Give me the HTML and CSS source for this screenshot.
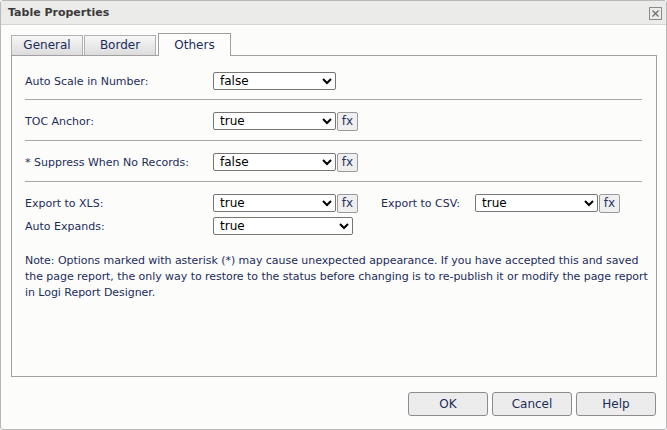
FILE: index.html
```html
<!DOCTYPE html>
<html lang="en">
<head>
    <meta charset="UTF-8">
    <title>Table Properties</title>
    <link rel="stylesheet" href="styles.css">
</head>
<body>
    <div class="dialog">
        <div class="dialog-title">
            <span>Table Properties</span>
            <svg class="close-icon" width="13" height="13" viewBox="0 0 13 13">
                <rect x="0.5" y="0.5" width="12" height="12" fill="none" stroke="#8a8a8a"/>
                <path d="M3.5 3.5 L9.5 9.5 M9.5 3.5 L3.5 9.5" stroke="#6a6a6a" stroke-width="1.2"/>
            </svg>
        </div>

        <div class="dialog-body">
            <div class="tabs">
                <div class="tab">General</div>
                <div class="tab">Border</div>
                <div class="tab active">Others</div>
            </div>

            <div class="panel">
                <div class="section first">
                    <div class="row">
                        <label class="field-label">Auto Scale in Number:</label>
                        <select class="field-select"><option>false</option><option>true</option></select>
                    </div>
                </div>

                <div class="section">
                    <div class="row">
                        <label class="field-label">TOC Anchor:</label>
                        <select class="field-select"><option>true</option><option>false</option></select>
                        <button class="fx-btn">fx</button>
                    </div>
                </div>

                <div class="section">
                    <div class="row">
                        <label class="field-label">* Suppress When No Records:</label>
                        <select class="field-select"><option>false</option><option>true</option></select>
                        <button class="fx-btn">fx</button>
                    </div>
                </div>

                <div class="section last">
                    <div class="row">
                        <label class="field-label">Export to XLS:</label>
                        <select class="field-select"><option>true</option><option>false</option></select>
                        <button class="fx-btn">fx</button>
                        <label class="field-label csv-label">Export to CSV:</label>
                        <select class="field-select"><option>true</option><option>false</option></select>
                        <button class="fx-btn">fx</button>
                    </div>
                    <div class="row">
                        <label class="field-label">Auto Expands:</label>
                        <select class="field-select wide"><option>true</option><option>false</option></select>
                    </div>
                </div>

                <p class="note">
                    Note: Options marked with asterisk (*) may cause unexpected appearance. If you have accepted this and saved<br>
                    the page report, the only way to restore to the status before changing is to re-publish it or modify the page report<br>
                    in Logi Report Designer.
                </p>
            </div>
        </div>

        <div class="dialog-footer">
            <button class="dlg-btn">OK</button>
            <button class="dlg-btn">Cancel</button>
            <button class="dlg-btn">Help</button>
        </div>
    </div>
</body>
</html>
```

FILE: styles.css
```css
html, body {
    margin: 0;
    padding: 0;
    background: #fcfdfb;
}

body {
    font-family: 'DejaVu Sans', Verdana, sans-serif;
    font-size: 11px;
    color: #1c2c5a;
}

.dialog {
    width: 667px;
    height: 430px;
    box-sizing: border-box;
    border: 1px solid #b8b8b8;
    border-radius: 3px;
    background: #fcfdfb;
    display: flex;
    flex-direction: column;
}

.dialog-title {
    height: 23px;
    display: flex;
    align-items: center;
    justify-content: space-between;
    padding: 0 4px 0 7px;
    background: #ebebe9;
    border-bottom: 1px solid #d4d4d2;
    font-size: 11px;
    font-weight: bold;
    color: #3a3a3a;
}

.close-icon {
    margin-top: 1px;
}

.dialog-body {
    padding: 9px 9px 0 10px;
}

.tabs {
    display: flex;
    align-items: flex-end;
    gap: 1px;
    height: 21px;
}

.tab {
    width: 70px;
    height: 19px;
    line-height: 19px;
    text-align: center;
    border: 1px solid #b0b0b0;
    border-bottom: none;
    background: linear-gradient(#f7f7f7, #dcdcdc);
    font-size: 12px;
}

.tab.active {
    width: 71px;
    height: 22px;
    line-height: 22px;
    margin-left: 1px;
    border-color: #a0a0a0;
    background: #fcfdfb;
    position: relative;
    top: 1px;
}

.panel {
    height: 320px;
    border: 1px solid #a0a0a0;
    padding: 0 14px 0 13px;
}

.section {
    padding: 11px 0 9px;
    border-bottom: 1px solid #a8a8a8;
}

.section.first {
    padding-top: 15px;
    padding-bottom: 8px;
}

.section.last {
    border-bottom: none;
    padding-bottom: 0;
}

.row {
    display: flex;
    align-items: center;
    height: 20px;
}

.row + .row {
    margin-top: 3px;
}

.field-label {
    width: 188px;
    flex-shrink: 0;
}

.csv-label {
    width: 94px;
    margin-left: 23px;
}

.field-select {
    width: 123px;
    height: 18px;
    padding: 0 0 0 2px;
    font-family: 'DejaVu Sans', Verdana, sans-serif;
    font-size: 12px;
    color: #000;
    background: #fff;
    border: 1px solid #767676;
    border-radius: 2px;
}

.field-select.wide {
    width: 140px;
}

.fx-btn {
    width: 21px;
    height: 19px;
    margin-left: 1px;
    padding: 0;
    font-family: 'DejaVu Sans', Verdana, sans-serif;
    font-size: 12px;
    color: #2a3466;
    background: #efefef;
    border: 1px solid #9a9a9a;
    border-radius: 2px;
}

.note {
    margin: 17px 0 0;
    line-height: 16px;
    white-space: nowrap;
    letter-spacing: -0.05px;
}

.dialog-footer {
    display: flex;
    justify-content: flex-end;
    gap: 4px;
    padding: 15px 10px 0 0;
}

.dlg-btn {
    width: 80px;
    height: 24px;
    font-family: 'DejaVu Sans', Verdana, sans-serif;
    font-size: 12px;
    color: #1c2c5a;
    background: #ececec;
    border: 1px solid #8c8c8c;
    border-radius: 3px;
}
```
